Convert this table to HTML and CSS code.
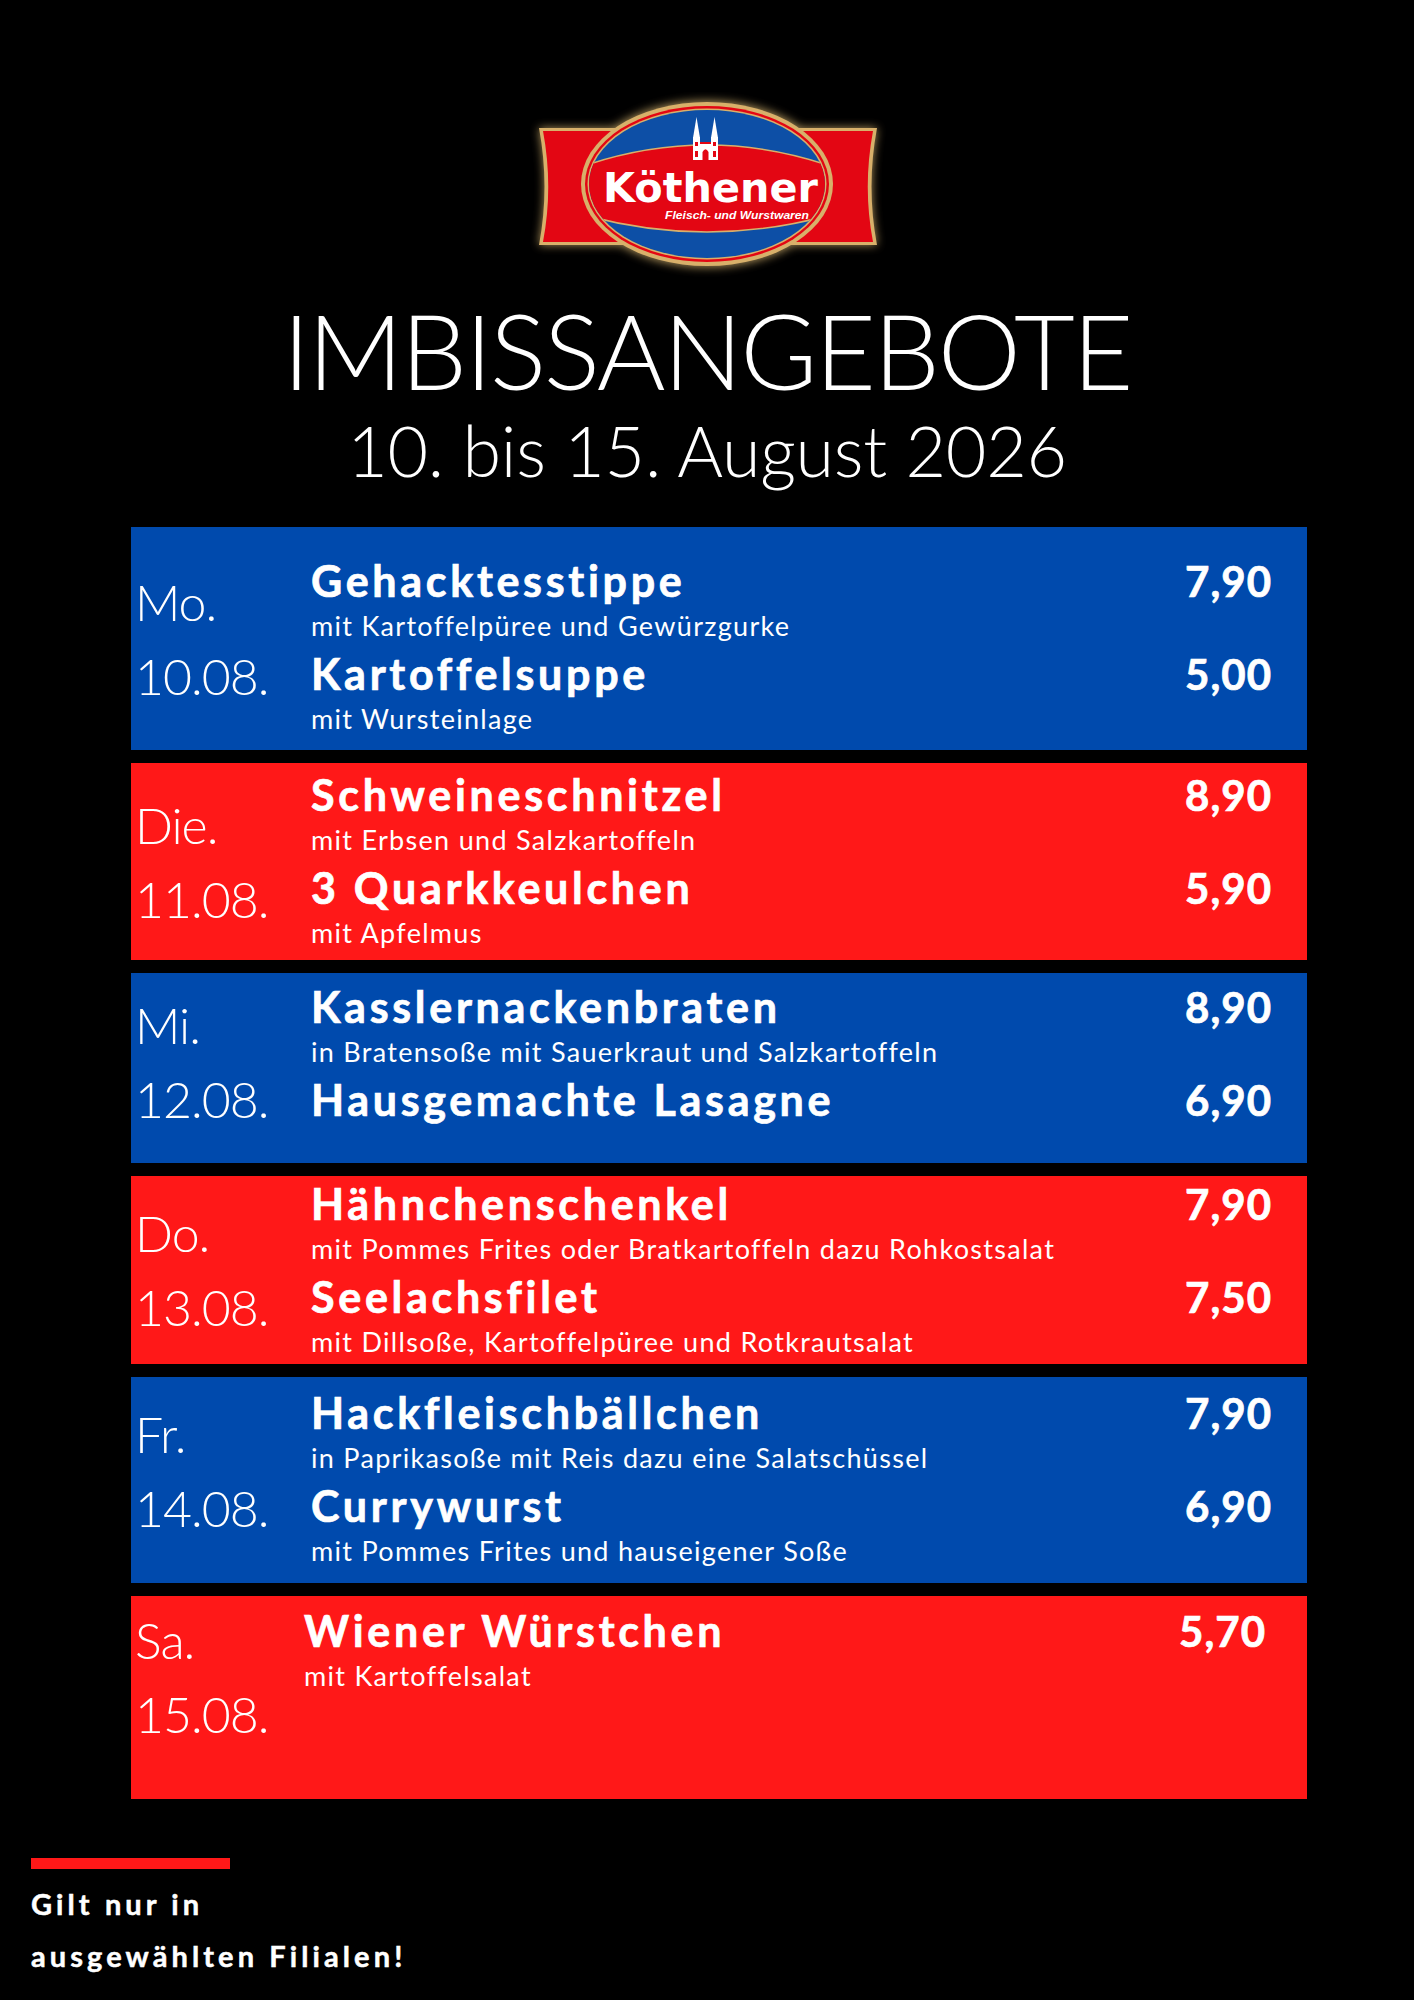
FILE: index.html
```html
<!DOCTYPE html>
<html lang="de">
<head>
<meta charset="utf-8">
<title>Imbissangebote</title>
<link rel="stylesheet" href="styles.css">
</head>
<body>
<main class="page">
  <header class="head">
    <svg class="logo" viewBox="0 0 360 190" xmlns="http://www.w3.org/2000/svg">
      <defs>
        <filter id="glow" x="-20%" y="-30%" width="140%" height="160%">
          <feGaussianBlur stdDeviation="5"/>
        </filter>
        <clipPath id="ovalClip">
          <ellipse cx="180" cy="92" rx="118" ry="74"/>
        </clipPath>
      </defs>
      <g filter="url(#glow)" opacity="0.75" fill="#e9c47a">
        <path d="M12,36 L350,36 Q339,95 350,153 L12,153 Q23,95 12,36 Z"/>
        <ellipse cx="180" cy="92" rx="127" ry="83"/>
      </g>
      <path d="M12,36 L350,36 Q339,95 350,153 L12,153 Q23,95 12,36 Z" fill="#d8b06a"/>
      <path d="M16,39 L346,39 Q335.5,95 346,150 L16,150 Q26.5,95 16,39 Z" fill="#e30613"/>
      <ellipse cx="180" cy="92" rx="126" ry="82" fill="#d8b06a"/>
      <ellipse cx="180" cy="92" rx="122" ry="78" fill="#e30613"/>
      <ellipse cx="180" cy="92" rx="119.5" ry="75.5" fill="#d8b06a"/>
      <g clip-path="url(#ovalClip)">
        <rect x="50" y="10" width="260" height="170" fill="#0d4fa6"/>
        <path d="M40,80 Q180,26 320,80 L320,118 Q180,162 40,118 Z" fill="#e30613" stroke="#d8b06a" stroke-width="1.5"/>
      </g>
      <polygon points="166,46 169.5,25 173,46" fill="#fff"/>
      <polygon points="184,46 187.5,25 191,46" fill="#fff"/>
      <rect x="166" y="45" width="7" height="23" fill="#fff"/>
      <rect x="184" y="45" width="7" height="23" fill="#fff"/>
      <rect x="173" y="50" width="11" height="18" fill="#fff"/>
      <rect x="173" y="50" width="11" height="2" fill="#e30613"/>
      <path d="M175.5,68 L175.5,60 Q178.5,54.5 181.5,60 L181.5,68 Z" fill="#e30613"/>
      <rect x="168" y="50" width="3" height="4" fill="#e30613"/>
      <rect x="186" y="50" width="3" height="4" fill="#e30613"/>
      <rect x="168" y="59" width="3" height="6" fill="#e30613"/>
      <rect x="186" y="59" width="3" height="6" fill="#e30613"/>
      <text class="logo-name" x="76" y="110" textLength="215" lengthAdjust="spacingAndGlyphs">Köthener</text>
      <text class="logo-sub" x="138" y="127" textLength="144" lengthAdjust="spacingAndGlyphs">Fleisch- und Wurstwaren</text>
    </svg>
    <h1 class="title">IMBISSANGEBOTE</h1>
    <p class="period">10. bis 15. August 2026</p>
  </header>

  <div class="days">
    <section class="day day-blue d-mo">
      <div class="date"><span>Mo.</span><span>10.08.</span></div>
      <div class="items">
        <div class="item">
          <div class="item-head"><span class="name">Gehacktesstippe</span><span class="price">7,90</span></div>
          <div class="desc">mit Kartoffelpüree und Gewürzgurke</div>
        </div>
        <div class="item">
          <div class="item-head"><span class="name">Kartoffelsuppe</span><span class="price">5,00</span></div>
          <div class="desc">mit Wursteinlage</div>
        </div>
      </div>
    </section>

    <section class="day day-red d-die">
      <div class="date"><span>Die.</span><span>11.08.</span></div>
      <div class="items">
        <div class="item">
          <div class="item-head"><span class="name">Schweineschnitzel</span><span class="price">8,90</span></div>
          <div class="desc">mit Erbsen und Salzkartoffeln</div>
        </div>
        <div class="item">
          <div class="item-head"><span class="name">3 Quarkkeulchen</span><span class="price">5,90</span></div>
          <div class="desc">mit Apfelmus</div>
        </div>
      </div>
    </section>

    <section class="day day-blue d-mi">
      <div class="date"><span>Mi.</span><span>12.08.</span></div>
      <div class="items">
        <div class="item">
          <div class="item-head"><span class="name">Kasslernackenbraten</span><span class="price">8,90</span></div>
          <div class="desc">in Bratensoße mit Sauerkraut und Salzkartoffeln</div>
        </div>
        <div class="item">
          <div class="item-head"><span class="name">Hausgemachte Lasagne</span><span class="price">6,90</span></div>
        </div>
      </div>
    </section>

    <section class="day day-red d-do">
      <div class="date"><span>Do.</span><span>13.08.</span></div>
      <div class="items">
        <div class="item">
          <div class="item-head"><span class="name">Hähnchenschenkel</span><span class="price">7,90</span></div>
          <div class="desc">mit Pommes Frites oder Bratkartoffeln dazu Rohkostsalat</div>
        </div>
        <div class="item">
          <div class="item-head"><span class="name">Seelachsfilet</span><span class="price">7,50</span></div>
          <div class="desc">mit Dillsoße, Kartoffelpüree und Rotkrautsalat</div>
        </div>
      </div>
    </section>

    <section class="day day-blue d-fr">
      <div class="date"><span>Fr.</span><span>14.08.</span></div>
      <div class="items">
        <div class="item">
          <div class="item-head"><span class="name">Hackfleischbällchen</span><span class="price">7,90</span></div>
          <div class="desc">in Paprikasoße mit Reis dazu eine Salatschüssel</div>
        </div>
        <div class="item">
          <div class="item-head"><span class="name">Currywurst</span><span class="price">6,90</span></div>
          <div class="desc">mit Pommes Frites und hauseigener Soße</div>
        </div>
      </div>
    </section>

    <section class="day day-red d-sa">
      <div class="date"><span>Sa.</span><span>15.08.</span></div>
      <div class="items">
        <div class="item">
          <div class="item-head"><span class="name">Wiener Würstchen</span><span class="price">5,70</span></div>
          <div class="desc">mit Kartoffelsalat</div>
        </div>
      </div>
    </section>
  </div>

  <footer class="note">
    <div class="note-bar"></div>
    <p class="note-text">Gilt nur in<br>ausgewählten Filialen!</p>
  </footer>
</main>
</body>
</html>
```

FILE: styles.css
```css
* { box-sizing: border-box; }

body {
  margin: 0;
  background: #000;
  color: #fff;
  font-family: Lato, "Open Sans", sans-serif;
}

.page {
  width: 1414px;
  height: 2000px;
  overflow: hidden;
}

.head {
  display: flex;
  flex-direction: column;
  align-items: center;
  padding-top: 92px;
}

.logo {
  display: block;
  width: 360px;
  height: 190px;
}

.logo-name {
  font-family: "DejaVu Sans", sans-serif;
  font-weight: 700;
  font-size: 41px;
  fill: #fff;
}

.logo-sub {
  font-family: "Liberation Sans", sans-serif;
  font-weight: 700;
  font-style: italic;
  font-size: 11px;
  fill: #fff;
}

.title {
  margin: 15px 0 0;
  font-weight: 300;
  font-size: 105px;
  line-height: 105px;
  letter-spacing: -2.3px;
}

.period {
  margin: 13px 0 0;
  font-weight: 300;
  font-size: 70px;
  line-height: 70px;
  letter-spacing: -0.3px;
}

.days {
  display: flex;
  flex-direction: column;
  gap: 13px;
  width: 1176px;
  margin: 42px 0 0 131px;
}

.day {
  display: flex;
}

.day-blue { background: #004aad; }
.day-red { background: #ff1818; }

.date {
  flex: 0 0 180px;
  align-self: center;
  padding-left: 4px;
  font-weight: 300;
  font-size: 50px;
  line-height: 74px;
  letter-spacing: -1px;
}

.date span { display: block; }

.items {
  flex: 1;
  display: flex;
  flex-direction: column;
  gap: 12px;
  padding-right: 36px;
}

.item-head {
  display: flex;
  justify-content: space-between;
  align-items: baseline;
}

.name,
.price {
  font-weight: 700;
  line-height: 42px;
  -webkit-text-stroke: 0.7px #fff;
}

.name {
  font-size: 43px;
  letter-spacing: 3.7px;
}

.price {
  font-size: 42px;
  letter-spacing: 1px;
  margin-right: -1px;
}

.desc {
  margin-top: 9px;
  font-weight: 400;
  font-size: 27px;
  line-height: 30px;
  letter-spacing: 1.3px;
}

.d-mo { height: 223px; }
.d-mo .items { padding-top: 33px; }

.d-die { height: 197px; }
.d-die .items { padding-top: 11px; }

.d-mi { height: 190px; }
.d-mi .items { padding-top: 13px; }
.d-mi .date { margin-bottom: 13px; }

.d-do { height: 188px; }
.d-do .items { padding-top: 7px; }

.d-fr { height: 206px; }
.d-fr .items { padding-top: 15px; }
.d-fr .date { margin-bottom: 19px; }

.d-sa { height: 203px; }
.d-sa .items { padding-top: 14px; margin-left: -7px; padding-right: 42px; }
.d-sa .date { margin-bottom: 42px; }

.note {
  margin-top: 59px;
  padding-left: 31px;
}

.note-bar {
  width: 199px;
  height: 11px;
  background: #ff1818;
}

.note-text {
  margin: 9px 0 0;
  font-weight: 700;
  font-size: 29px;
  line-height: 52px;
  letter-spacing: 4.1px;
  -webkit-text-stroke: 0.5px #fff;
}
```
